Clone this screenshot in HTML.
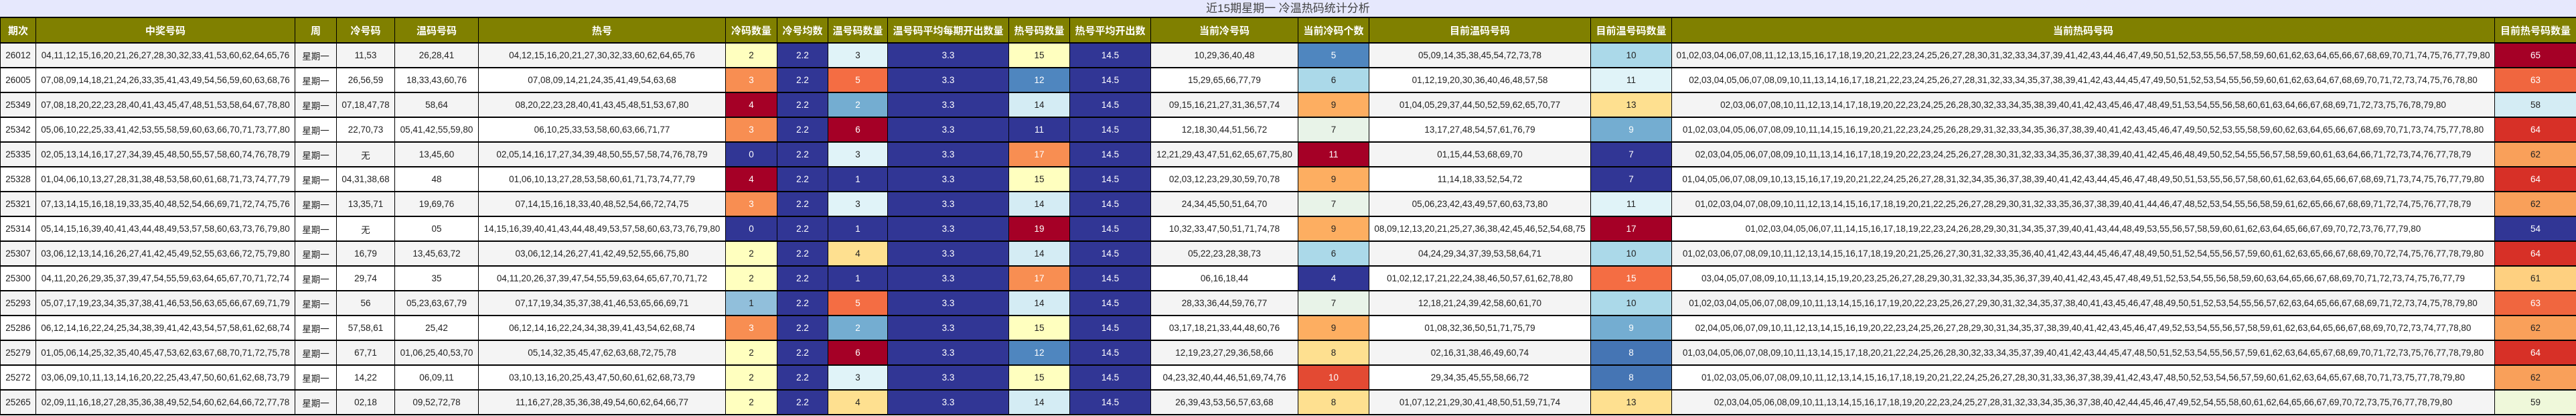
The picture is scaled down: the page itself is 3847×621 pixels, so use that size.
<!DOCTYPE html>
<html><head><meta charset="utf-8">
<style>
html,body{margin:0;padding:0;background:#fff;}
body{width:3847px;height:621px;overflow:hidden;font-family:"Liberation Sans","Noto Sans CJK SC",sans-serif;}
.title{height:25px;line-height:25px;background:#e6e8fd;color:#444;text-align:center;font-size:17px;border-bottom:2px solid #000;box-sizing:content-box;}
table{border-collapse:collapse;table-layout:fixed;width:3847px;}
td,th{border-left:1px solid #000;border-right:1px solid #000;padding:0;text-align:center;white-space:nowrap;overflow:hidden;font-size:13.5px;color:#222;}
th{background:#808000;color:#fff;font-weight:bold;font-size:15px;height:36px;border-bottom:2px solid #000;}
tr.r td{height:35px;border-bottom:2px solid #000;}
tr.g1 td{background:#f4f4f4;}
tr.g2 td{background:#fff;}
tr td.n{background:#313695;color:#fff}
tr td.y{background:#ffffbf}
tr td.o{background:#f88e52;color:#fff}
tr td.R{background:#a50026;color:#fff}
tr td.ro{background:#f46d43;color:#fff}
tr td.c{background:#e0f3f8}
tr td.m{background:#74add1;color:#fff}
tr td.b{background:#4f86bf;color:#fff}
tr td.bb{background:#4575b4;color:#fff}
tr td.a{background:#abd9e9}
tr td.f{background:#fdae61}
tr td.G{background:#fee090}
tr td.e{background:#e8f3e8}
tr td.l{background:#d4ecf4}
tr td.d{background:#d73027;color:#fff}
tr td.s{background:#91bfdb}
tr td.t{background:#e34a33;color:#fff}
tr td.u{background:#fed080}
tr td.v{background:#eff8da}
tr td.p{background:#f0663f;color:#fff}
tr td.q{background:#f9a05a}
</style></head><body>
<div class="title">近15期星期一 冷温热码统计分析</div>
<table>
<colgroup><col style="width:53px"><col style="width:387px"><col style="width:62px"><col style="width:87px"><col style="width:125px"><col style="width:369px"><col style="width:77px"><col style="width:76px"><col style="width:89px"><col style="width:181px"><col style="width:91px"><col style="width:121px"><col style="width:220px"><col style="width:106px"><col style="width:331px"><col style="width:121px"><col style="width:1229px"><col style="width:122px"></colgroup>
<tr><th>期次</th><th>中奖号码</th><th>周</th><th>冷号码</th><th>温码号码</th><th>热号</th><th>冷码数量</th><th>冷号均数</th><th>温号码数量</th><th>温号码平均每期开出数量</th><th>热号码数量</th><th>热号平均开出数</th><th>当前冷号码</th><th>当前冷码个数</th><th>目前温码号码</th><th>目前温号码数量</th><th>当前热码号码</th><th>目前热号码数量</th></tr>
<tr class="r g1"><td>26012</td><td>04,11,12,15,16,20,21,26,27,28,30,32,33,41,53,60,62,64,65,76</td><td>星期一</td><td>11,53</td><td>26,28,41</td><td>04,12,15,16,20,21,27,30,32,33,60,62,64,65,76</td><td class="y">2</td><td class="n">2.2</td><td class="c">3</td><td class="n">3.3</td><td class="y">15</td><td class="n">14.5</td><td>10,29,36,40,48</td><td class="b">5</td><td>05,09,14,35,38,45,54,72,73,78</td><td class="a">10</td><td>01,02,03,04,06,07,08,11,12,13,15,16,17,18,19,20,21,22,23,24,25,26,27,28,30,31,32,33,34,37,39,41,42,43,44,46,47,49,50,51,52,53,55,56,57,58,59,60,61,62,63,64,65,66,67,68,69,70,71,74,75,76,77,79,80</td><td class="R">65</td></tr>
<tr class="r g2"><td>26005</td><td>07,08,09,14,18,21,24,26,33,35,41,43,49,54,56,59,60,63,68,76</td><td>星期一</td><td>26,56,59</td><td>18,33,43,60,76</td><td>07,08,09,14,21,24,35,41,49,54,63,68</td><td class="o">3</td><td class="n">2.2</td><td class="ro">5</td><td class="n">3.3</td><td class="b">12</td><td class="n">14.5</td><td>15,29,65,66,77,79</td><td class="a">6</td><td>01,12,19,20,30,36,40,46,48,57,58</td><td class="c">11</td><td>02,03,04,05,06,07,08,09,10,11,13,14,16,17,18,21,22,23,24,25,26,27,28,31,32,33,34,35,37,38,39,41,42,43,44,45,47,49,50,51,52,53,54,55,56,59,60,61,62,63,64,67,68,69,70,71,72,73,74,75,76,78,80</td><td class="p">63</td></tr>
<tr class="r g1"><td>25349</td><td>07,08,18,20,22,23,28,40,41,43,45,47,48,51,53,58,64,67,78,80</td><td>星期一</td><td>07,18,47,78</td><td>58,64</td><td>08,20,22,23,28,40,41,43,45,48,51,53,67,80</td><td class="R">4</td><td class="n">2.2</td><td class="m">2</td><td class="n">3.3</td><td class="l">14</td><td class="n">14.5</td><td>09,15,16,21,27,31,36,57,74</td><td class="f">9</td><td>01,04,05,29,37,44,50,52,59,62,65,70,77</td><td class="G">13</td><td>02,03,06,07,08,10,11,12,13,14,17,18,19,20,22,23,24,25,26,28,30,32,33,34,35,38,39,40,41,42,43,45,46,47,48,49,51,53,54,55,56,58,60,61,63,64,66,67,68,69,71,72,73,75,76,78,79,80</td><td class="l">58</td></tr>
<tr class="r g2"><td>25342</td><td>05,06,10,22,25,33,41,42,53,55,58,59,60,63,66,70,71,73,77,80</td><td>星期一</td><td>22,70,73</td><td>05,41,42,55,59,80</td><td>06,10,25,33,53,58,60,63,66,71,77</td><td class="o">3</td><td class="n">2.2</td><td class="R">6</td><td class="n">3.3</td><td class="n">11</td><td class="n">14.5</td><td>12,18,30,44,51,56,72</td><td class="e">7</td><td>13,17,27,48,54,57,61,76,79</td><td class="m">9</td><td>01,02,03,04,05,06,07,08,09,10,11,14,15,16,19,20,21,22,23,24,25,26,28,29,31,32,33,34,35,36,37,38,39,40,41,42,43,45,46,47,49,50,52,53,55,58,59,60,62,63,64,65,66,67,68,69,70,71,73,74,75,77,78,80</td><td class="d">64</td></tr>
<tr class="r g1"><td>25335</td><td>02,05,13,14,16,17,27,34,39,45,48,50,55,57,58,60,74,76,78,79</td><td>星期一</td><td>无</td><td>13,45,60</td><td>02,05,14,16,17,27,34,39,48,50,55,57,58,74,76,78,79</td><td class="n">0</td><td class="n">2.2</td><td class="c">3</td><td class="n">3.3</td><td class="o">17</td><td class="n">14.5</td><td>12,21,29,43,47,51,62,65,67,75,80</td><td class="R">11</td><td>01,15,44,53,68,69,70</td><td class="n">7</td><td>02,03,04,05,06,07,08,09,10,11,13,14,16,17,18,19,20,22,23,24,25,26,27,28,30,31,32,33,34,35,36,37,38,39,40,41,42,45,46,48,49,50,52,54,55,56,57,58,59,60,61,63,64,66,71,72,73,74,76,77,78,79</td><td class="q">62</td></tr>
<tr class="r g2"><td>25328</td><td>01,04,06,10,13,27,28,31,38,48,53,58,60,61,68,71,73,74,77,79</td><td>星期一</td><td>04,31,38,68</td><td>48</td><td>01,06,10,13,27,28,53,58,60,61,71,73,74,77,79</td><td class="R">4</td><td class="n">2.2</td><td class="n">1</td><td class="n">3.3</td><td class="y">15</td><td class="n">14.5</td><td>02,03,12,23,29,30,59,70,78</td><td class="f">9</td><td>11,14,18,33,52,54,72</td><td class="n">7</td><td>01,04,05,06,07,08,09,10,13,15,16,17,19,20,21,22,24,25,26,27,28,31,32,34,35,36,37,38,39,40,41,42,43,44,45,46,47,48,49,50,51,53,55,56,57,58,60,61,62,63,64,65,66,67,68,69,71,73,74,75,76,77,79,80</td><td class="d">64</td></tr>
<tr class="r g1"><td>25321</td><td>07,13,14,15,16,18,19,33,35,40,48,52,54,66,69,71,72,74,75,76</td><td>星期一</td><td>13,35,71</td><td>19,69,76</td><td>07,14,15,16,18,33,40,48,52,54,66,72,74,75</td><td class="o">3</td><td class="n">2.2</td><td class="c">3</td><td class="n">3.3</td><td class="l">14</td><td class="n">14.5</td><td>24,34,45,50,51,64,70</td><td class="e">7</td><td>05,06,23,42,43,49,57,60,63,73,80</td><td class="c">11</td><td>01,02,03,04,07,08,09,10,11,12,13,14,15,16,17,18,19,20,21,22,25,26,27,28,29,30,31,32,33,35,36,37,38,39,40,41,44,46,47,48,52,53,54,55,56,58,59,61,62,65,66,67,68,69,71,72,74,75,76,77,78,79</td><td class="q">62</td></tr>
<tr class="r g2"><td>25314</td><td>05,14,15,16,39,40,41,43,44,48,49,53,57,58,60,63,73,76,79,80</td><td>星期一</td><td>无</td><td>05</td><td>14,15,16,39,40,41,43,44,48,49,53,57,58,60,63,73,76,79,80</td><td class="n">0</td><td class="n">2.2</td><td class="n">1</td><td class="n">3.3</td><td class="R">19</td><td class="n">14.5</td><td>10,32,33,47,50,51,71,74,78</td><td class="f">9</td><td>08,09,12,13,20,21,25,27,36,38,42,45,46,52,54,68,75</td><td class="R">17</td><td>01,02,03,04,05,06,07,11,14,15,16,17,18,19,22,23,24,26,28,29,30,31,34,35,37,39,40,41,43,44,48,49,53,55,56,57,58,59,60,61,62,63,64,65,66,67,69,70,72,73,76,77,79,80</td><td class="n">54</td></tr>
<tr class="r g1"><td>25307</td><td>03,06,12,13,14,16,26,27,41,42,45,49,52,55,63,66,72,75,79,80</td><td>星期一</td><td>16,79</td><td>13,45,63,72</td><td>03,06,12,14,26,27,41,42,49,52,55,66,75,80</td><td class="y">2</td><td class="n">2.2</td><td class="G">4</td><td class="n">3.3</td><td class="l">14</td><td class="n">14.5</td><td>05,22,23,28,38,73</td><td class="a">6</td><td>04,24,29,34,37,39,53,58,64,71</td><td class="a">10</td><td>01,02,03,06,07,08,09,10,11,12,13,14,15,16,17,18,19,20,21,25,26,27,30,31,32,33,35,36,40,41,42,43,44,45,46,47,48,49,50,51,52,54,55,56,57,59,60,61,62,63,65,66,67,68,69,70,72,74,75,76,77,78,79,80</td><td class="d">64</td></tr>
<tr class="r g2"><td>25300</td><td>04,11,20,26,29,35,37,39,47,54,55,59,63,64,65,67,70,71,72,74</td><td>星期一</td><td>29,74</td><td>35</td><td>04,11,20,26,37,39,47,54,55,59,63,64,65,67,70,71,72</td><td class="y">2</td><td class="n">2.2</td><td class="n">1</td><td class="n">3.3</td><td class="o">17</td><td class="n">14.5</td><td>06,16,18,44</td><td class="n">4</td><td>01,02,12,17,21,22,24,38,46,50,57,61,62,78,80</td><td class="ro">15</td><td>03,04,05,07,08,09,10,11,13,14,15,19,20,23,25,26,27,28,29,30,31,32,33,34,35,36,37,39,40,41,42,43,45,47,48,49,51,52,53,54,55,56,58,59,60,63,64,65,66,67,68,69,70,71,72,73,74,75,76,77,79</td><td class="u">61</td></tr>
<tr class="r g1"><td>25293</td><td>05,07,17,19,23,34,35,37,38,41,46,53,56,63,65,66,67,69,71,79</td><td>星期一</td><td>56</td><td>05,23,63,67,79</td><td>07,17,19,34,35,37,38,41,46,53,65,66,69,71</td><td class="s">1</td><td class="n">2.2</td><td class="ro">5</td><td class="n">3.3</td><td class="l">14</td><td class="n">14.5</td><td>28,33,36,44,59,76,77</td><td class="e">7</td><td>12,18,21,24,39,42,58,60,61,70</td><td class="a">10</td><td>01,02,03,04,05,06,07,08,09,10,11,13,14,15,16,17,19,20,22,23,25,26,27,29,30,31,32,34,35,37,38,40,41,43,45,46,47,48,49,50,51,52,53,54,55,56,57,62,63,64,65,66,67,68,69,71,72,73,74,75,78,79,80</td><td class="p">63</td></tr>
<tr class="r g2"><td>25286</td><td>06,12,14,16,22,24,25,34,38,39,41,42,43,54,57,58,61,62,68,74</td><td>星期一</td><td>57,58,61</td><td>25,42</td><td>06,12,14,16,22,24,34,38,39,41,43,54,62,68,74</td><td class="o">3</td><td class="n">2.2</td><td class="m">2</td><td class="n">3.3</td><td class="y">15</td><td class="n">14.5</td><td>03,17,18,21,33,44,48,60,76</td><td class="f">9</td><td>01,08,32,36,50,51,71,75,79</td><td class="m">9</td><td>02,04,05,06,07,09,10,11,12,13,14,15,16,19,20,22,23,24,25,26,27,28,29,30,31,34,35,37,38,39,40,41,42,43,45,46,47,49,52,53,54,55,56,57,58,59,61,62,63,64,65,66,67,68,69,70,72,73,74,77,78,80</td><td class="q">62</td></tr>
<tr class="r g1"><td>25279</td><td>01,05,06,14,25,32,35,40,45,47,53,62,63,67,68,70,71,72,75,78</td><td>星期一</td><td>67,71</td><td>01,06,25,40,53,70</td><td>05,14,32,35,45,47,62,63,68,72,75,78</td><td class="y">2</td><td class="n">2.2</td><td class="R">6</td><td class="n">3.3</td><td class="b">12</td><td class="n">14.5</td><td>12,19,23,27,29,36,58,66</td><td class="G">8</td><td>02,16,31,38,46,49,60,74</td><td class="bb">8</td><td>01,03,04,05,06,07,08,09,10,11,13,14,15,17,18,20,21,22,24,25,26,28,30,32,33,34,35,37,39,40,41,42,43,44,45,47,48,50,51,52,53,54,55,56,57,59,61,62,63,64,65,67,68,69,70,71,72,73,75,76,77,78,79,80</td><td class="d">64</td></tr>
<tr class="r g2"><td>25272</td><td>03,06,09,10,11,13,14,16,20,22,25,43,47,50,60,61,62,68,73,79</td><td>星期一</td><td>14,22</td><td>06,09,11</td><td>03,10,13,16,20,25,43,47,50,60,61,62,68,73,79</td><td class="y">2</td><td class="n">2.2</td><td class="c">3</td><td class="n">3.3</td><td class="y">15</td><td class="n">14.5</td><td>04,23,32,40,44,46,51,69,74,76</td><td class="t">10</td><td>29,34,35,45,55,58,66,72</td><td class="bb">8</td><td>01,02,03,05,06,07,08,09,10,11,12,13,14,15,16,17,18,19,20,21,22,24,25,26,27,28,30,31,33,36,37,38,39,41,42,43,47,48,50,52,53,54,56,57,59,60,61,62,63,64,65,67,68,70,71,73,75,77,78,79,80</td><td class="q">62</td></tr>
<tr class="r g1"><td>25265</td><td>02,09,11,16,18,27,28,35,36,38,49,52,54,60,62,64,66,72,77,78</td><td>星期一</td><td>02,18</td><td>09,52,72,78</td><td>11,16,27,28,35,36,38,49,54,60,62,64,66,77</td><td class="y">2</td><td class="n">2.2</td><td class="G">4</td><td class="n">3.3</td><td class="l">14</td><td class="n">14.5</td><td>26,39,43,53,56,57,63,68</td><td class="G">8</td><td>01,07,12,21,29,30,41,48,50,51,59,71,74</td><td class="G">13</td><td>02,03,04,05,06,08,09,10,11,13,14,15,16,17,18,19,20,22,23,24,25,27,28,31,32,33,34,35,36,37,38,40,42,44,45,46,47,49,52,54,55,58,60,61,62,64,65,66,67,69,70,72,73,75,76,77,78,79,80</td><td class="v">59</td></tr>
</table>
</body></html>
